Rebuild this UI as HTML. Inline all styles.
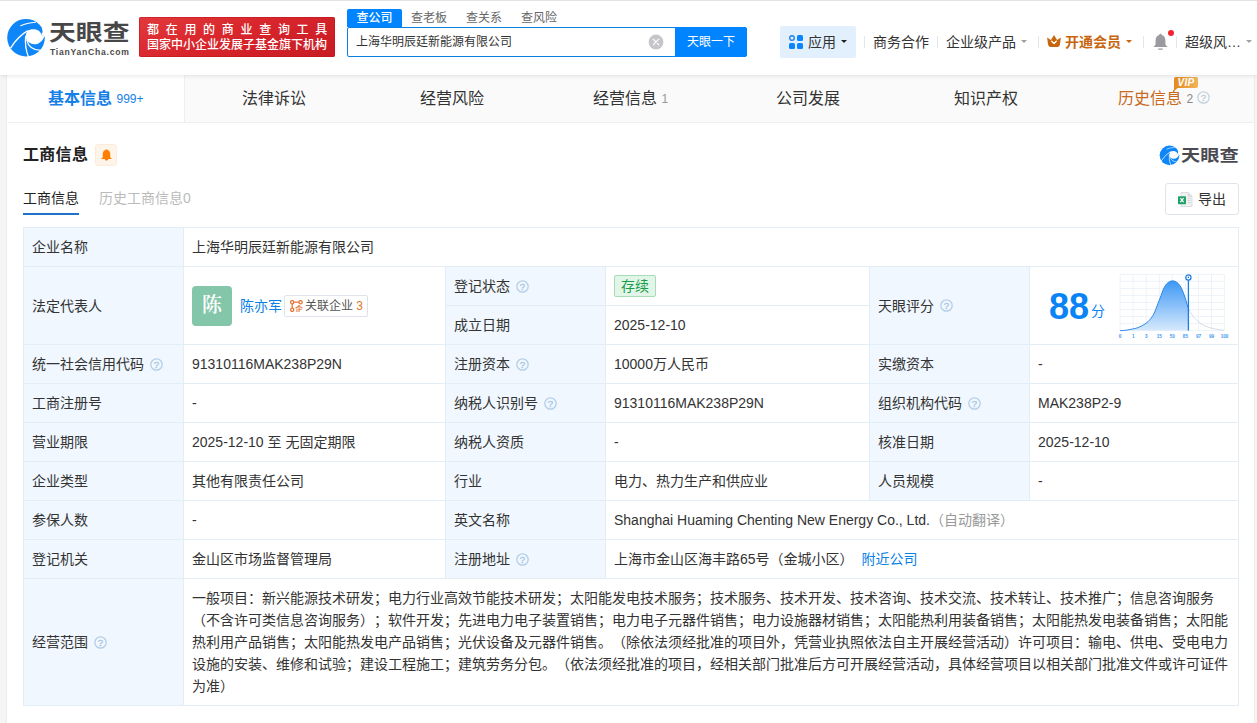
<!DOCTYPE html>
<html lang="zh-CN">
<head>
<meta charset="utf-8">
<title>上海华明辰廷新能源有限公司 - 天眼查</title>
<style>
*{box-sizing:border-box;margin:0;padding:0}
html,body{width:1257px;height:723px;overflow:hidden}
body{text-spacing-trim:space-all;background:#f5f5f5;font-family:"Liberation Sans","Noto Sans CJK SC",sans-serif;font-size:14px;color:#333;position:relative}
a{text-decoration:none;color:#0a7fe6}
.abs{position:absolute}
i{font-style:normal}
/* header */
#hdr{position:absolute;left:0;top:0;width:1257px;height:75px;background:#fff;border-top:1px solid #e2e2e2;box-shadow:0 1px 4px rgba(0,0,0,.10);z-index:5}
#logo-txt{position:absolute;left:49px;top:14px;font-size:22px;line-height:36px;font-weight:700;color:#474747;white-space:nowrap;transform-origin:0 50%;transform:scaleX(1.22)}
#logo-sub{position:absolute;left:50px;top:45px;font-size:8.6px;line-height:12px;font-weight:700;color:#4c4c4c;letter-spacing:.75px;white-space:nowrap}
#slogan{position:absolute;left:139px;top:16px;width:196px;height:40px;background:linear-gradient(160deg,#e2393c 0%,#d8262c 45%,#c81b23 100%);border-radius:2px;color:#fff;font-size:12px;white-space:nowrap;font-weight:500;box-shadow:inset 0 0 0 1px rgba(190,20,25,.5)}
#slogan span{position:absolute;left:8px;height:16px;line-height:16px}
#slogan .l1{top:5px;letter-spacing:6.7px}
#slogan .l2{top:20px;letter-spacing:0}
#stabs{position:absolute;left:347px;top:8px;height:18px;white-space:nowrap;font-size:12px;line-height:18px;color:#666}
#stabs span{position:absolute;top:0;height:18px}
#stabs .on{left:0;background:#0084ff;color:#fff;width:55px;text-align:center;border-radius:2px 2px 0 0;font-weight:500}
#sbox{position:absolute;left:347px;top:26px;width:400px;height:30px;border:1px solid #0b7fe8;border-radius:2px;background:#fff}
#sbox .q{position:absolute;left:8px;top:0;line-height:28px;font-size:12px;color:#333}
#sbox .btn{position:absolute;right:-1px;top:-1px;width:72px;height:30px;background:#0084ff;color:#fff;font-size:12px;line-height:30px;text-align:center;border-radius:0 3px 3px 0}
.nav{position:absolute;top:29px;height:24px;line-height:24px;font-size:14px;color:#333;white-space:nowrap}
.caret{position:absolute;top:39px;width:0;height:0;border-left:3.7px solid transparent;border-right:3.7px solid transparent;border-top:3.7px solid #a0a0a0;margin-left:-.2px}
.vsep{position:absolute;top:35px;width:1px;height:12px;background:#e4e6ea}
/* tabs */
#wrap{position:absolute;left:6px;top:75px;width:1249px;height:660px;background:#fff;border-left:1px solid #ececec;border-right:1px solid #ececec}
#tabs{position:absolute;left:1px;top:0;width:1246px;height:48px;background:#fafafa;border-bottom:1px solid #eeeeee}
#tabs .t{position:absolute;top:0;height:47px;line-height:47px;font-size:16px;color:#333;white-space:nowrap}
#tabs .on{left:-1px;width:178px;background:#fff;border-right:1px solid #efefef;color:#1780e6;font-weight:700}
#tabs small{font-size:12px;font-weight:400;color:#999;position:relative;top:-1px}
/* card */
#h1{position:absolute;left:23px;top:143px;font-size:16px;line-height:24px;font-weight:700;color:#222;letter-spacing:.3px}
#bell1{position:absolute;left:95px;top:144px;width:22px;height:22px;background:#fff4e9;border:1px solid #fdebd9;border-radius:3px}
#sub1{position:absolute;left:23px;top:187px;font-size:14px;line-height:22px;color:#222}
#sub1u{position:absolute;left:23px;top:213px;width:56px;height:2px;background:#1c73c8}
#sub2{position:absolute;left:99px;top:187px;font-size:14px;line-height:22px;color:#bbb}
#exp{position:absolute;left:1165px;top:183px;width:74px;height:32px;border:1px solid #dfe3ea;border-radius:3px;background:#fff;font-size:14px;line-height:30px;color:#333}
#wm{position:absolute;left:1181px;top:144px;font-size:16px;line-height:24px;font-weight:700;color:#4a4a50;white-space:nowrap;transform-origin:0 50%;transform:scaleX(1.2)}
/* table */
#tb{position:absolute;left:23px;top:227px;width:1215px;border-collapse:collapse;table-layout:fixed;font-size:14px;color:#333}
#tb td{border:1px solid #e3edf6;height:39px;padding:0 8px;line-height:22px;vertical-align:middle;white-space:nowrap;overflow:hidden}
#tb td.k{background:#f0f7fe}
.qm{display:inline-block;width:13px;height:13px;vertical-align:middle;margin-left:6px;position:relative;top:-1px}
.tag-g{display:inline-block;height:22px;line-height:20px;padding:0 6px;border:1px solid #a6dcb6;background:#e1f6e8;color:#1a9d48;font-size:14px;border-radius:2px;position:relative;top:-1px;vertical-align:middle}
</style>
</head>
<body>
<svg width="0" height="0" style="position:absolute">
  <defs>
    <symbol id="swirl" viewBox="0 0 723 723">
      <circle cx="362" cy="357" r="309" fill="#0f86f7"/>
      <path d="M622,196 L636,262 L610,306 L640,322 L700,310 L700,190Z" fill="#fff"/>
      <path d="M385,245 C430,208 530,206 580,250 C600,268 612,288 610,306 L640,322 L700,305 L700,350 L662,335 C640,400 585,462 500,465 C450,465 400,440 372,392 C355,365 350,345 356,330 C362,295 370,262 385,245Z" fill="#fff"/>
      <path d="M392,240 Q225,335 108,528" fill="none" stroke="#fff" stroke-width="22"/>
      <path d="M357,330 Q335,500 402,672" fill="none" stroke="#fff" stroke-width="21"/>
      <path d="M372,388 Q410,560 604,566" fill="none" stroke="#fff" stroke-width="20"/>
      <path d="M275,160 Q370,118 520,103" fill="none" stroke="#fff" stroke-width="17" stroke-linecap="round"/>
    </symbol>
  </defs>
</svg>
<div id="hdr">
  <svg class="abs" style="left:4px;top:15px" width="44" height="44"><use href="#swirl"/></svg>
  <div id="logo-txt">天眼查</div>
  <div id="logo-sub">TianYanCha.com</div>
  <div id="slogan"><span class="l1">都在用的商业查询工具</span><span class="l2">国家中小企业发展子基金旗下机构</span></div>
  <div id="stabs"><span class="on">查公司</span><span style="left:64px">查老板</span><span style="left:119px">查关系</span><span style="left:174px">查风险</span></div>
  <div id="sbox"><span class="q">上海华明辰廷新能源有限公司</span>
    <svg class="abs" style="left:300px;top:6px" width="16" height="16" viewBox="0 0 16 16"><circle cx="8" cy="8" r="7.4" fill="#c6c6ca"/><path d="M5.2 5.2L10.8 10.8M10.8 5.2L5.2 10.8" stroke="#fff" stroke-width="1.2" stroke-linecap="round"/></svg>
    <span class="btn">天眼一下</span></div>
  <div class="abs" style="left:780px;top:25px;width:76px;height:32px;background:#e2effd;border-radius:2px"></div>
  <svg class="abs" style="left:789px;top:34px" width="14" height="14" viewBox="0 0 14 14"><circle cx="3" cy="3" r="2.3" fill="none" stroke="#2587ee" stroke-width="1.5"/><rect x="8" y="0" width="6" height="6" rx="1.5" fill="#0a84ff"/><rect x="0" y="8" width="6" height="6" rx="1.5" fill="#0a84ff"/><rect x="8" y="8" width="6" height="6" rx="1.5" fill="#0a84ff"/></svg>
  <div class="nav" style="left:808px">应用</div><i class="caret" style="left:841px;border-top-color:#222"></i>
  <div class="nav" style="left:873px">商务合作</div>
  <div class="nav" style="left:946px">企业级产品</div><i class="caret" style="left:1021px"></i>
  <svg class="abs" style="left:1047px;top:34px" width="14" height="12" viewBox="0 0 14 12"><path d="M0.1 2.6 L3.9 5 L7 0.1 L10.1 5 L13.9 2.6 L12.9 9.8 Q12.6 11.9 10.6 11.9 L3.4 11.9 Q1.4 11.9 1.1 9.8Z" fill="#c8650f"/><path d="M4.7 6.3 L7 8.5 L9.3 6.3" fill="none" stroke="#fff" stroke-width="1.4" stroke-linecap="round" stroke-linejoin="round"/></svg>
  <div class="nav" style="left:1065px;color:#c8650f;font-weight:700">开通会员</div><i class="caret" style="left:1126px;border-top-color:#c8650f"></i>
  <svg class="abs" style="left:1153px;top:32px" width="15" height="18" viewBox="0 0 15 18"><path d="M7.5 0.8 C8.3 0.8 8.8 1.4 8.8 2.1 C11.2 2.8 12.4 4.8 12.4 7.4 L12.4 10.8 C12.4 12 13.2 12.8 14.2 13.6 L14.2 14 L0.8 14 L0.8 13.6 C1.8 12.8 2.6 12 2.6 10.8 L2.6 7.4 C2.6 4.8 3.8 2.8 6.2 2.1 C6.2 1.4 6.7 0.8 7.5 0.8Z" fill="#9b9b9f"/><rect x="5" y="15.4" width="5" height="1.4" rx=".7" fill="#9b9b9f"/></svg>
  <i class="abs" style="left:1168px;top:29px;width:6px;height:6px;border-radius:50%;background:#f5222d"></i>
  <div class="nav" style="left:1185px">超级风…</div><i class="caret" style="left:1246px"></i>
  <i class="vsep" style="left:864px"></i><i class="vsep" style="left:937px"></i><i class="vsep" style="left:1038px"></i><i class="vsep" style="left:1143px"></i><i class="vsep" style="left:1176px"></i>
</div>

<div id="wrap">
<div id="tabs">
  <div class="t on" style="padding-left:41px">基本信息 <small style="color:#1780e6">999+</small></div>
  <div class="t" style="left:234px">法律诉讼</div>
  <div class="t" style="left:412px">经营风险</div>
  <div class="t" style="left:585px">经营信息 <small>1</small></div>
  <div class="t" style="left:768px">公司发展</div>
  <div class="t" style="left:946px">知识产权</div>
  <div class="t" style="left:1110px;color:#c8691c">历史信息 <small style="color:#888">2</small><svg style="display:inline-block;width:13px;height:13px;vertical-align:middle;margin-left:4px;position:relative;top:-2px" viewBox="0 0 13 13"><circle cx="6.5" cy="6.5" r="5.7" fill="none" stroke="#c3d0dd" stroke-width="1.25"/><text x="6.5" y="9.8" font-size="9.5" text-anchor="middle" fill="#bccad8" stroke="#bccad8" stroke-width=".3" font-family="Liberation Sans,sans-serif">?</text></svg></div>
  <div class="abs" style="left:1166px;top:2px;width:24px;height:11px;border-radius:2px;background:linear-gradient(90deg,#e38a1e,#f2b35a);color:#fff;font-size:10px;line-height:12px;font-weight:700;font-style:italic;text-align:center;letter-spacing:.3px;font-family:'Liberation Sans',sans-serif">VIP</div>
  <svg class="abs" style="left:1166px;top:12px" width="5" height="4" viewBox="0 0 5 4"><path d="M0 0L5 0L0 4Z" fill="#e38a1e"/></svg>
</div>
</div>

<div id="h1">工商信息</div>
<div id="bell1"><svg class="abs" style="left:5px;top:4px" width="11" height="12" viewBox="0 0 11 12"><path d="M5.5 0.2 C6.1 0.2 6.4 0.6 6.5 1 C8.4 1.5 9.2 3 9.2 4.8 L9.2 7.4 C9.2 8.3 9.8 8.9 10.6 9.4 L10.6 9.9 L7.2 9.9 C7 10.9 6.3 11.5 5.5 11.5 C4.7 11.5 4 10.9 3.8 9.9 L0.4 9.9 L0.4 9.4 C1.2 8.9 1.8 8.3 1.8 7.4 L1.8 4.8 C1.8 3 2.6 1.5 4.5 1 C4.6 0.6 4.9 0.2 5.5 0.2Z" fill="#ff8000"/></svg></div>
<svg class="abs" style="left:1157.5px;top:143.6px" width="23" height="23"><use href="#swirl"/></svg>
<div id="wm">天眼查</div>
<div id="sub1">工商信息</div><div id="sub1u"></div>
<div id="sub2">历史工商信息0</div>
<div id="exp">
  <svg class="abs" style="left:12px;top:8px" width="15" height="15" viewBox="0 0 15 15"><path d="M3 0.5 L10.2 0.5 L14 4.2 L14 14.5 L3 14.5Z" fill="#f1f1f3" stroke="#d6d6da" stroke-width=".8"/><path d="M10.2 0.5 L10.2 4.2 L14 4.2" fill="#e2e2e6" stroke="#d0d0d4" stroke-width=".6"/><path d="M9.6 6.6h3M9.6 8.6h3M9.6 10.6h3" stroke="#cfcfd3" stroke-width=".8"/><rect x="0" y="4.2" width="8" height="8" rx=".8" fill="#21a366"/><path d="M2.4 6.2L5.6 10.2M5.6 6.2L2.4 10.2" stroke="#fff" stroke-width="1.2"/></svg>
  <span style="position:absolute;left:32px;top:0">导出</span></div>

<table id="tb">
<colgroup><col style="width:160px"><col style="width:262px"><col style="width:160px"><col style="width:264px"><col style="width:160px"><col style="width:209px"></colgroup>
<tr><td class="k">企业名称</td><td colspan="5">上海华明辰廷新能源有限公司</td></tr>
<tr><td class="k" rowspan="2">法定代表人</td><td rowspan="2" style="position:relative">
  <span style="position:absolute;left:8px;top:19px;width:40px;height:40px;border-radius:4px;background:#84c6aa;color:#fff;font-size:20px;line-height:39px;text-align:center;font-weight:600;font-family:'Liberation Serif','Noto Serif CJK SC',serif">陈</span>
  <a style="position:absolute;left:56px;top:28px">陈亦军</a>
  <span style="position:absolute;left:100px;top:28px;width:84px;height:22px;border:1px solid #dfe3ea;border-radius:2px;font-size:12px;line-height:20px;color:#555;padding-left:20px">关联企业 <i style="color:#e0762c">3</i>
    <svg class="abs" style="left:5px;top:4px" width="13" height="12" viewBox="0 0 13 12"><g fill="none" stroke="#e8773a" stroke-width="1.3"><circle cx="2.2" cy="2.2" r="1.6"/><circle cx="10.6" cy="2.2" r="1.6"/><circle cx="2.2" cy="9.8" r="1.6"/><path d="M3.8 2.2H9M2.2 3.8V8.2"/></g><text x="5" y="11.8" font-size="8" font-weight="700" fill="#e8773a" font-family="Noto Sans CJK SC,sans-serif">企</text></svg>
  </span>
</td><td class="k">登记状态<svg class="qm" viewBox="0 0 13 13"><circle cx="6.5" cy="6.5" r="5.7" fill="none" stroke="#b2cde7" stroke-width="1.25"/><text x="6.5" y="9.8" font-size="9.5" text-anchor="middle" fill="#a6c5e2" stroke="#a6c5e2" stroke-width=".3" font-family="Liberation Sans,sans-serif">?</text></svg></td><td><span class="tag-g">存续</span></td><td class="k" rowspan="2">天眼评分<svg class="qm" viewBox="0 0 13 13"><circle cx="6.5" cy="6.5" r="5.7" fill="none" stroke="#b2cde7" stroke-width="1.25"/><text x="6.5" y="9.8" font-size="9.5" text-anchor="middle" fill="#a6c5e2" stroke="#a6c5e2" stroke-width=".3" font-family="Liberation Sans,sans-serif">?</text></svg></td><td rowspan="2" style="position:relative"><span style="position:absolute;left:19px;top:18px;font-size:36px;line-height:44px;font-weight:700;color:#0a84f5">88</span><span style="position:absolute;left:61px;top:33px;font-size:14px;color:#0a84f5">分</span>
<svg class="abs" style="left:90px;top:3px" width="114" height="72" viewBox="0 0 114 72" overflow="visible">
<defs><linearGradient id="cg" x1="0" y1="0" x2="0" y2="1"><stop offset="0" stop-color="#3d98f5"/><stop offset="1" stop-color="#d6e9fd"/></linearGradient></defs>
<g stroke="#e6eef7" stroke-width=".7" fill="none"><path d="M0.1 4.3V60.6"/><path d="M13.2 4.3V60.6"/><path d="M26.2 4.3V60.6"/><path d="M39.3 4.3V60.6"/><path d="M52.3 4.3V60.6"/><path d="M65.4 4.3V60.6"/><path d="M78.5 4.3V60.6"/><path d="M91.5 4.3V60.6"/><path d="M104.6 4.3V60.6"/><path d="M0.1 4.3H104.6"/><path d="M0.1 11.3H104.6"/><path d="M0.1 18.4H104.6"/><path d="M0.1 25.4H104.6"/><path d="M0.1 32.5H104.6"/><path d="M0.1 39.5H104.6"/><path d="M0.1 46.5H104.6"/><path d="M0.1 53.6H104.6"/><path d="M0.1 60.6H104.6"/></g>
<polygon points="0.1,60.6 1.1,60.6 2.1,60.5 3.1,60.5 4.1,60.4 5.1,60.3 6.1,60.2 7.1,60.0 8.1,59.9 9.1,59.7 10.1,59.5 11.1,59.3 12.1,59.1 13.1,58.9 14.1,58.7 15.1,58.5 16.1,58.2 17.1,57.9 18.1,57.6 19.1,57.1 20.1,56.7 21.1,56.2 22.1,55.7 23.1,55.1 24.1,54.5 25.1,53.9 26.1,53.2 27.1,52.4 28.1,51.5 29.1,50.5 30.1,49.4 31.1,48.2 32.1,46.9 33.1,45.3 34.1,43.4 35.1,41.1 36.1,38.5 37.1,35.9 38.1,33.2 39.1,30.6 40.1,28.1 41.1,25.4 42.1,22.6 43.1,20.0 44.1,17.7 45.1,16.0 46.1,14.6 47.1,13.4 48.1,12.5 49.1,12.0 50.1,11.5 51.1,11.1 52.1,10.9 53.1,10.9 54.1,11.1 55.1,11.5 56.1,12.0 57.1,12.5 58.1,13.4 59.1,14.5 60.1,15.9 61.1,17.5 62.1,19.6 63.1,22.1 64.1,24.8 65.1,27.6 66.1,30.9 67.1,34.6 68.1,37.7 68.4,38.4 68.4,60.6 0.1,60.6" fill="url(#cg)"/>
<polyline points="0.1,60.6 1.1,60.6 2.1,60.5 3.1,60.5 4.1,60.4 5.1,60.3 6.1,60.2 7.1,60.0 8.1,59.9 9.1,59.7 10.1,59.5 11.1,59.3 12.1,59.1 13.1,58.9 14.1,58.7 15.1,58.5 16.1,58.2 17.1,57.9 18.1,57.6 19.1,57.1 20.1,56.7 21.1,56.2 22.1,55.7 23.1,55.1 24.1,54.5 25.1,53.9 26.1,53.2 27.1,52.4 28.1,51.5 29.1,50.5 30.1,49.4 31.1,48.2 32.1,46.9 33.1,45.3 34.1,43.4 35.1,41.1 36.1,38.5 37.1,35.9 38.1,33.2 39.1,30.6 40.1,28.1 41.1,25.4 42.1,22.6 43.1,20.0 44.1,17.7 45.1,16.0 46.1,14.6 47.1,13.4 48.1,12.5 49.1,12.0 50.1,11.5 51.1,11.1 52.1,10.9 53.1,10.9 54.1,11.1 55.1,11.5 56.1,12.0 57.1,12.5 58.1,13.4 59.1,14.5 60.1,15.9 61.1,17.5 62.1,19.6 63.1,22.1 64.1,24.8 65.1,27.6 66.1,30.9 67.1,34.6 68.1,37.7 68.4,38.4" fill="none" stroke="#2a87e8" stroke-width="1"/>
<polyline points="68.4,38.4 69.1,39.9 70.1,41.8 71.1,43.5 72.1,45.0 73.1,46.4 74.1,47.6 75.1,48.6 76.1,49.6 77.1,50.6 78.1,51.4 79.1,52.3 80.1,53.0 81.1,53.7 82.1,54.4 83.1,55.0 84.1,55.5 85.1,55.9 86.1,56.3 87.1,56.7 88.1,57.1 89.1,57.4 90.1,57.7 91.1,58.0 92.1,58.3 93.1,58.5 94.1,58.7 95.1,58.9 96.1,59.1 97.1,59.3 98.1,59.5 99.1,59.6 100.1,59.8 101.1,59.9 102.1,60.1 103.1,60.2 104.1,60.3" fill="none" stroke="#c9d4e0" stroke-width=".8"/>
<path d="M68.4 9.5V60.6" stroke="#1a7be0" stroke-width="1.3"/>
<circle cx="68.4" cy="7.4" r="2.6" fill="#fff" stroke="#1a7be0" stroke-width="1.2"/><circle cx="68.4" cy="7.4" r=".8" fill="#1a7be0"/>
<g font-size="4.6" fill="#3d98f5" font-family="Liberation Sans,sans-serif" font-weight="700"><text x="0.1" y="67.6" text-anchor="middle">0</text><text x="13.2" y="67.6" text-anchor="middle">1</text><text x="26.2" y="67.6" text-anchor="middle">3</text><text x="39.3" y="67.6" text-anchor="middle">15</text><text x="52.3" y="67.6" text-anchor="middle">50</text><text x="65.4" y="67.6" text-anchor="middle">85</text><text x="78.5" y="67.6" text-anchor="middle">97</text><text x="91.5" y="67.6" text-anchor="middle">99</text><text x="104.6" y="67.6" text-anchor="middle">100</text></g>
</svg>
</td></tr>
<tr><td class="k">成立日期</td><td>2025-12-10</td></tr>
<tr><td class="k">统一社会信用代码<svg class="qm" viewBox="0 0 13 13"><circle cx="6.5" cy="6.5" r="5.7" fill="none" stroke="#b2cde7" stroke-width="1.25"/><text x="6.5" y="9.8" font-size="9.5" text-anchor="middle" fill="#a6c5e2" stroke="#a6c5e2" stroke-width=".3" font-family="Liberation Sans,sans-serif">?</text></svg></td><td>91310116MAK238P29N</td><td class="k">注册资本<svg class="qm" viewBox="0 0 13 13"><circle cx="6.5" cy="6.5" r="5.7" fill="none" stroke="#b2cde7" stroke-width="1.25"/><text x="6.5" y="9.8" font-size="9.5" text-anchor="middle" fill="#a6c5e2" stroke="#a6c5e2" stroke-width=".3" font-family="Liberation Sans,sans-serif">?</text></svg></td><td>10000万人民币</td><td class="k">实缴资本</td><td>-</td></tr>
<tr><td class="k">工商注册号</td><td>-</td><td class="k">纳税人识别号<svg class="qm" viewBox="0 0 13 13"><circle cx="6.5" cy="6.5" r="5.7" fill="none" stroke="#b2cde7" stroke-width="1.25"/><text x="6.5" y="9.8" font-size="9.5" text-anchor="middle" fill="#a6c5e2" stroke="#a6c5e2" stroke-width=".3" font-family="Liberation Sans,sans-serif">?</text></svg></td><td>91310116MAK238P29N</td><td class="k">组织机构代码<svg class="qm" viewBox="0 0 13 13"><circle cx="6.5" cy="6.5" r="5.7" fill="none" stroke="#b2cde7" stroke-width="1.25"/><text x="6.5" y="9.8" font-size="9.5" text-anchor="middle" fill="#a6c5e2" stroke="#a6c5e2" stroke-width=".3" font-family="Liberation Sans,sans-serif">?</text></svg></td><td>MAK238P2-9</td></tr>
<tr><td class="k">营业期限</td><td>2025-12-10 至 无固定期限</td><td class="k">纳税人资质</td><td>-</td><td class="k">核准日期</td><td>2025-12-10</td></tr>
<tr><td class="k">企业类型</td><td>其他有限责任公司</td><td class="k">行业</td><td>电力、热力生产和供应业</td><td class="k">人员规模</td><td>-</td></tr>
<tr><td class="k">参保人数</td><td>-</td><td class="k">英文名称</td><td colspan="3">Shanghai Huaming Chenting New Energy Co., Ltd.<span style="color:#999">（自动翻译）</span></td></tr>
<tr><td class="k">登记机关</td><td>金山区市场监督管理局</td><td class="k">注册地址<svg class="qm" viewBox="0 0 13 13"><circle cx="6.5" cy="6.5" r="5.7" fill="none" stroke="#b2cde7" stroke-width="1.25"/><text x="6.5" y="9.8" font-size="9.5" text-anchor="middle" fill="#a6c5e2" stroke="#a6c5e2" stroke-width=".3" font-family="Liberation Sans,sans-serif">?</text></svg></td><td colspan="3">上海市金山区海丰路65号（金城小区）<a style="margin-left:8px">附近公司</a></td></tr>
<tr><td class="k" style="height:127px">经营范围<svg class="qm" viewBox="0 0 13 13"><circle cx="6.5" cy="6.5" r="5.7" fill="none" stroke="#b2cde7" stroke-width="1.25"/><text x="6.5" y="9.8" font-size="9.5" text-anchor="middle" fill="#a6c5e2" stroke="#a6c5e2" stroke-width=".3" font-family="Liberation Sans,sans-serif">?</text></svg></td><td colspan="5" style="white-space:normal;line-height:22px">一般项目：新兴能源技术研发；电力行业高效节能技术研发；太阳能发电技术服务；技术服务、技术开发、技术咨询、技术交流、技术转让、技术推广；信息咨询服务（不含许可类信息咨询服务）；软件开发；先进电力电子装置销售；电力电子元器件销售；电力设施器材销售；太阳能热利用装备销售；太阳能热发电装备销售；太阳能热利用产品销售；太阳能热发电产品销售；光伏设备及元器件销售。（除依法须经批准的项目外，凭营业执照依法自主开展经营活动）许可项目：输电、供电、受电电力设施的安装、维修和试验；建设工程施工；建筑劳务分包。（依法须经批准的项目，经相关部门批准后方可开展经营活动，具体经营项目以相关部门批准文件或许可证件为准）</td></tr>
</table>
</body>
</html>
